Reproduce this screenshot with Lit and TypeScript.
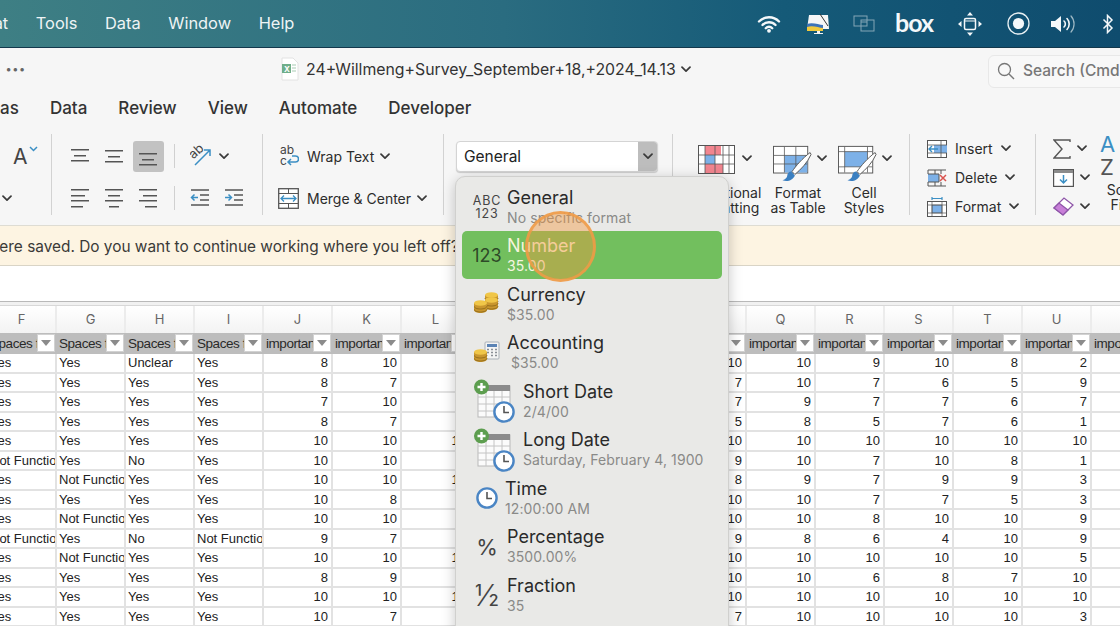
import { LitElement, html, css, svg } from "lit";
import { customElement } from "lit/decorators.js";

const chev = (cls = "") => html`<svg class="chev ${cls}" width="10" height="7" viewBox="0 0 10 7"><path d="M1 1.2 5 5.2 9 1.2" fill="none" stroke="#3a3a3a" stroke-width="1.7" stroke-linecap="round" stroke-linejoin="round"/></svg>`;

const lines = (rows: [number, number, number][]) => html`<svg width="22" height="24" viewBox="0 0 22 24">${rows.map(([y, a, b]) => svg`<rect x="${a}" y="${y}" width="${b - a}" height="1.5" fill="#555"/>`)}</svg>`;

const coin = (x: number, y: number) => svg`<g><path d="M${x} ${y}v7c0 1.9 3 3 6.5 3s6.5-1.1 6.5-3v-7z" fill="#c9962e"/><path d="M${x} ${y + 3}c0 1.9 3 3 6.5 3s6.5-1.1 6.5-3M${x} ${y + 6}c0 1.9 3 3 6.5 3s6.5-1.1 6.5-3" fill="none" stroke="#8a6618" stroke-width=".8"/><ellipse cx="${x + 6.5}" cy="${y}" rx="6.5" ry="2.8" fill="#f0c648"/></g>`;

const calendar = html`<svg width="44" height="44" viewBox="0 0 44 44">
  <rect x="4" y="7" width="32" height="31" fill="#fbfbfb" stroke="#b9b9b9"/>
  <rect x="8" y="6" width="28" height="6" fill="#8b8b8b"/>
  <path d="M4 18h32M4 25h32M4 32h32M12 12v26M20 12v26M28 12v26" stroke="#c4c4c4" fill="none"/>
  <circle cx="7.500" cy="8" r="7.500" fill="#5d9e4f"/>
  <path d="M7.500 4v8M3.500 8h8" stroke="#fff" stroke-width="2.4"/>
  <circle cx="30" cy="33" r="9.600" fill="#fff" stroke="#4a85c4" stroke-width="2.4"/>
  <path d="M30 27v6.500h5" fill="none" stroke="#555" stroke-width="1.600"/>
</svg>`;

const ICONS: Record<string, unknown> = {
  abc: html`<span class="abc"><b>ABC</b><b>123</b></span>`,
  num: html`<span class="num">123</span>`,
  coins: html`<svg width="26" height="24" viewBox="0 0 26 24">${coin(11, 3)}${coin(11, 8)}${coin(0, 11)}</svg>`,
  acct: html`<svg width="26" height="24" viewBox="0 0 26 24"><rect x="11" y="1" width="14" height="17" rx="1" fill="#f4f4f4" stroke="#a9b0b8"/><rect x="13" y="3" width="10" height="3" fill="#5b83b5"/><path d="M13 8.500h2M17 8.500h2M21 8.500h2M13 11.500h2M17 11.500h2M21 11.500h2M17 14.500h2M21 14.500h2" stroke="#8a8f96" stroke-width="1.400"/>${coin(0, 11)}</svg>`,
  clock: html`<svg width="24" height="24" viewBox="0 0 24 24"><circle cx="12" cy="12" r="9.600" fill="#fff" stroke="#4a85c4" stroke-width="2.400"/><path d="M12 6v6.500h5" fill="none" stroke="#555" stroke-width="1.600"/></svg>`,
  pct: html`<span class="pct">%</span>`,
  frac: html`<span class="frac">½</span>`,
};

const MENU = [
  { i: "abc", t: "General", s: "No specific format", c: "" },
  { i: "num", t: "Number", s: "35.00", c: "on" },
  { i: "coins", t: "Currency", s: "$35.00", c: "" },
  { i: "acct", t: "Accounting", s: "$35.00", c: "acct" },
  { i: "cal", t: "Short Date", s: "2/4/00", c: "date" },
  { i: "cal", t: "Long Date", s: "Saturday, February 4, 1900", c: "date" },
  { i: "clock", t: "Time", s: "12:00:00 AM", c: "time" },
  { i: "pct", t: "Percentage", s: "3500.00%", c: "" },
  { i: "frac", t: "Fraction", s: "35", c: "" },
];

const Y = "Yes", NF = "Not Functional", NO = "No", UN = "Unclear";
const ROWS: (string | number)[][] = [
  [Y, Y, UN, Y, 8, 10, 7, 8, 9, 9, 10, 10, 9, 10, 8, 2, ""],
  [Y, Y, Y, Y, 8, 7, 7, 8, 8, 8, 7, 10, 7, 6, 5, 9, ""],
  [Y, Y, Y, Y, 7, 10, 7, 7, 9, 8, 7, 9, 7, 7, 6, 7, ""],
  [Y, Y, Y, Y, 8, 7, 6, 7, 7, 7, 5, 8, 5, 7, 6, 1, ""],
  [Y, Y, Y, Y, 10, 10, 10, 10, 10, 10, 10, 10, 10, 10, 10, 10, ""],
  [NF, Y, NO, Y, 10, 10, 9, 9, 9, 9, 9, 10, 7, 10, 8, 1, ""],
  [Y, NF, Y, Y, 10, 10, 10, 8, 8, 8, 8, 9, 7, 9, 9, 3, ""],
  [Y, Y, Y, Y, 10, 8, 9, 9, 10, 10, 10, 10, 7, 7, 5, 3, ""],
  [Y, NF, Y, Y, 10, 10, 9, 10, 10, 10, 10, 10, 8, 10, 10, 9, ""],
  [NF, Y, NO, NF, 9, 7, 8, 8, 8, 8, 9, 8, 6, 4, 10, 9, ""],
  [Y, NF, Y, Y, 10, 10, 10, 10, 10, 10, 10, 10, 10, 10, 10, 5, ""],
  [Y, Y, Y, Y, 8, 9, 8, 10, 10, 10, 10, 10, 6, 8, 7, 10, ""],
  [Y, Y, Y, Y, 10, 10, 10, 10, 10, 10, 10, 10, 10, 10, 10, 10, ""],
  [Y, Y, Y, Y, 10, 7, 9, 7, 7, 7, 7, 10, 10, 10, 10, 3, ""],
];
const LETTERS = "FGHIJKLMNOPQRSTUV".split("");
const HEADS = LETTERS.map((_, i) => (i < 4 ? "Spaces for" : "importance"));

@customElement("app-root")
export class AppRoot extends LitElement {
  static styles = css`
    :host { display: block; width: 1120px; height: 626px; overflow: hidden; position: relative; background: #fff; font-family: Inter, "Liberation Sans", sans-serif; color: #2a2a2a; }
    svg { display: block; flex: none; }

    .menubar { height: 47px; border-bottom: 1px solid #13384c; background: linear-gradient(90deg, #3e7f84 0%, #2a6c80 45%, #155a78 70%, #0f4c6e 100%); display: flex; align-items: center; color: #eef4f5; font-size: 16.4px; position: relative; }
    .mitems { display: flex; gap: 27.6px; margin-left: -46px; padding-bottom: 2px; }
    .status { position: absolute; inset: 0 0 0 auto; width: 375px; display: grid; grid-template-columns: 48px 50px 42px 58px 54px 42px 48px 42px; align-items: center; justify-items: center; }
    .boxlogo { font-family: Lato, Inter, sans-serif; font-weight: 700; font-size: 25px; letter-spacing: -1px; color: #f4f8fa; line-height: 1; padding-bottom: 3px; }

    .titlebar { height: 40px; background: #f6f6f6; display: flex; align-items: center; position: relative; padding-top: 2px; box-sizing: border-box; }
    .dots { margin-left: 6px; letter-spacing: 1.5px; color: #666; font-size: 11px; font-weight: 700; width: 275px; line-height: 1; }
    .doc { margin-right: 7px; }
    .ftitle { font-size: 15.83px; color: #333; white-space: nowrap; }
    .titlebar .chev { margin-left: 5px; }
    .search { position: absolute; left: 988px; top: 7px; width: 160px; height: 33px; box-sizing: border-box; border: 1px solid #e8e8e8; border-radius: 6px; background: #f8f8f8; display: flex; align-items: center; gap: 8px; padding: 0 0 2px 8px; font-size: 15.5px; font-weight: 500; color: #777; white-space: nowrap; }

    .tabs { height: 37px; background: #f6f6f6; display: flex; align-items: center; gap: 31px; font-size: 17px; font-weight: 500; color: #333; padding-top: 3px; box-sizing: border-box; }
    .tabs .cut { margin-left: -56px; }

    .ribbon { height: 100px; background: #f6f6f6; border-bottom: 1px solid #dedcd3; display: flex; font-size: 14px; color: #2c2c2c; white-space: nowrap; }
    .grp { flex: none; position: relative; box-sizing: border-box; }
    .grp + .grp::before { content: ""; position: absolute; left: 0; top: 9px; height: 81px; width: 1px; background: #d2d2d2; }
    .g0 { width: 51px; display: grid; grid-template-rows: 42px 42px; padding-top: 10px; }
    .afont { font-size: 21px; margin-left: 13px; display: flex; align-self: center; color: #444; }
    .afont svg { margin: 2px 0 0 1px; }
    .g0 .chev { margin: 0 0 0 2px; align-self: center; }
    .g1 { width: 211px; padding: 10px 0 0 12px; display: grid; grid-template-columns: 34px 34px 34px 18px 34px 34px; grid-template-rows: 42px 42px; justify-items: center; align-items: center; }
    .sel { width: 31px; height: 31px; border-radius: 3px; background: #c2c2c2; display: flex; align-items: center; justify-content: center; }
    .vsep { width: 1px; height: 24px; background: #d0d0d0; }
    .orient { grid-column: 5 / 7; justify-self: start; margin-left: 7px; display: flex; align-items: center; gap: 7px; }
    .g2 { width: 181px; padding: 10px 0 0 16px; display: grid; grid-template-rows: 42px 42px; }
    .iconrow { display: flex; align-items: center; gap: 8px; }
    .iconrow .chev { margin-left: 0; }
    .g2 .iconrow .chev { margin-left: -2px; }
    .wrapic { width: 21px; display: flex; justify-content: flex-end; }
    .g3 { width: 229px; padding: 16px 0 0 13px; }
    .combo { width: 202px; height: 31px; box-sizing: border-box; border: 1px solid #d4d4d4; border-radius: 4px; background: #fff; display: flex; align-items: stretch; box-shadow: 0 1px 1px #ccc; font-size: 15.5px; color: #222; }
    .combo span { flex: 1; padding-left: 7px; line-height: 29px; }
    .combo i { width: 19px; background: #bdbdbd; border-radius: 0 3px 3px 0; display: flex; align-items: center; justify-content: center; }
    .g4 { width: 237px; display: grid; grid-template-columns: 79px 66px 66px; padding-left: 14px; }
    .gal { display: flex; flex-direction: column; }
    .gal:first-child .glabel { width: 76px; }
    .gal:first-child .gtop { padding-left: 12px; gap: 7px; }
    .gtop { height: 60px; box-sizing: border-box; padding: 20px 0 0 8px; display: flex; gap: 5px; align-items: flex-start; }
    .gtop .chev { margin-top: 10px; }
    .gal:last-child .gtop { padding-left: 7px; }
    .glabel { text-align: center; line-height: 15px; }
    .g5 { width: 126px; padding: 9px 0 0 18px; display: grid; grid-template-rows: 29px 29px 29px; }
    .g6 { width: 90px; padding: 9px 0 0 18px; display: flex; }
    .stack { width: 47px; flex: none; display: grid; grid-template-rows: 29px 29px 29px; }
    .stack .iconrow { gap: 6px; }
    .sort { flex: none; width: 54px; }
    .sort .glabel { margin-top: 4px; }

    .banner { height: 39px; background: #fdf4e2; border-bottom: 1px solid #d9d4c6; font-size: 15.4px; line-height: 41px; white-space: nowrap; color: #3a3a38; overflow: hidden; }
    .banner span { margin-left: -13px; }
    .formula { height: 35px; background: #fff; border-bottom: 1px solid #b9b9b9; }
    .gap { height: 3px; background: #f1f1f1; border-bottom: 1px solid #d8d8d8; }

    .sheet { margin-left: -12px; display: grid; grid-template-columns: repeat(17, 69px); width: 1173px; font-family: "Liberation Sans", Arial, sans-serif; font-size: 13px; }
    .lt { height: 27px; background: linear-gradient(#fff, #f3f3f3); border-right: 2px solid #ececec; box-sizing: border-box; text-align: center; font-family: Inter, sans-serif; font-size: 13px; line-height: 26px; color: #666; }
    .hd { height: 21px; background: #bdbdbd; position: relative; overflow: hidden; padding: 2px 0 0 2px; box-sizing: border-box; line-height: 18px; color: #2a2a2a; white-space: nowrap; font-size: 13.5px; letter-spacing: -.45px; }
    .fb { position: absolute; right: 2px; top: 1px; width: 18px; height: 18px; background: #fff; box-sizing: border-box; border: 1px solid #d2d2d2; display: flex; align-items: center; justify-content: center; }
    .fb::after { content: ""; border: 5px solid transparent; border-top: 6px solid #8b8b8b; border-bottom: 0; }
    .cell { height: 19.5px; box-sizing: border-box; border-right: 2px solid #e2e2e2; border-bottom: 2px solid #e2e2e2; overflow: hidden; white-space: nowrap; padding: 0 3px 0 2px; line-height: 18px; color: #222; }
    .cell.n { text-align: right; }

    .menu { position: absolute; left: 455px; top: 176px; width: 274px; height: 470px; box-sizing: border-box; background: #e9e9e7; border: 1px solid #d0d0ce; border-radius: 10px; box-shadow: 0 3px 14px rgba(0,0,0,.22); padding: 5px 6px 6px; }
    .mi { height: 48.5px; box-sizing: border-box; border-radius: 5px; display: flex; align-items: center; padding: 2px 0 0 12px; }
    .mi.on { background: #72bf5e; color: #f7f4dc; }
    .mi.on small { color: #f6f6e2; }
    .mic { width: 26px; flex: none; display: flex; justify-content: center; align-items: center; margin-right: 7px; }
    .mt { display: flex; flex-direction: column; font-size: 18px; line-height: 20px; }
    .mi small { font-size: 14px; color: #8a8a88; line-height: 19px; letter-spacing: .1px; }
    .date .mic { width: 44px; margin: 0 5px 0 0; }
    .time .mic { margin-right: 5px; }
    .acct small { padding-left: 4px; }
    .abc { display: flex; flex-direction: column; align-items: center; font-size: 12.5px; line-height: 13px; letter-spacing: .8px; color: #444; }
    .abc b { font-weight: 400; }
    .num { font-size: 18px; color: #2e4a28; }
    .pct { font-size: 22px; color: #444; }
    .frac { font-size: 30px; line-height: 1; color: #444; font-weight: 300; }
    .touch { position: absolute; left: 525px; top: 211px; width: 71px; height: 71px; box-sizing: border-box; border-radius: 50%; background: rgba(242, 150, 60, .42); border: 3px solid rgba(240, 155, 70, .85); }
  `;

  private statusIcons() {
    return html`
      <svg width="24" height="18" viewBox="0 0 24 18"><path d="M2 6.500a14 14 0 0 1 20 0M5.500 10a9 9 0 0 1 13 0M8.800 13.200a4.400 4.400 0 0 1 6.400 0" fill="none" stroke="#f4f8fa" stroke-width="2.400" stroke-linecap="round"/><circle cx="12" cy="15.800" r="1.900" fill="#f4f8fa"/></svg>
      <svg width="25" height="23" viewBox="0 0 25 23"><path d="M3 3h19l1 14H1z" fill="#f6f6f6"/><path d="M1 12c6-2 12 1 16 1v4H1z" fill="#3d73b8"/><path d="M1 15c6-2 12 1 16 1v3H1z" fill="#f1c93c"/><path d="M14 2l8 12" stroke="#333" stroke-width="1"/><path d="M11 19h3v2h3v1H8v-1h3z" fill="#f4f4f4"/></svg>
      <svg width="22" height="17" viewBox="0 0 22 17" opacity=".55"><rect x="1" y="1" width="13" height="10" fill="none" stroke="#dfe8ec"/><rect x="8" y="5" width="13" height="11" fill="none" stroke="#dfe8ec"/><path d="M8 7h6" stroke="#dfe8ec"/></svg>
      <span class="boxlogo">box</span>
      <svg width="24" height="24" viewBox="0 0 24 24"><rect x="6.500" y="6.500" width="11" height="11" rx="1.500" fill="none" stroke="#f4f8fa" stroke-width="1.500"/><path d="M6.500 9h11" stroke="#f4f8fa"/><path d="M12 0l3 3.500H9zM12 24l-3-3.500h6zM0 12l3.500-3v6zM24 12l-3.500 3V9z" fill="#f4f8fa"/></svg>
      <svg width="23" height="23" viewBox="0 0 23 23"><circle cx="11.500" cy="11.500" r="10.500" fill="none" stroke="#e8f0f3" stroke-width="1.300"/><circle cx="11.500" cy="11.500" r="5.600" fill="#f4f8fa"/></svg>
      <svg width="26" height="20" viewBox="0 0 26 20"><path d="M1 7h4l6-5v16l-6-5H1z" fill="#f4f8fa"/><path d="M14 7a4 4 0 0 1 0 6M17 4.500a8 8 0 0 1 0 11" fill="none" stroke="#f4f8fa" stroke-width="1.600" stroke-linecap="round"/><path d="M21 2a12 12 0 0 1 0 16" fill="none" stroke="#9db8c4" stroke-width="1.200" stroke-linecap="round"/></svg>
      <svg width="12" height="20" viewBox="0 0 12 20"><path d="M1.500 5.500 10 14l-4.500 4.500v-17L10 6l-8.500 8.500" fill="none" stroke="#f4f8fa" stroke-width="1.500"/></svg>`;
  }

  private g1() {
    const top = lines([[5, 2, 20], [11, 5, 17], [16, 2, 20]]);
    const mid = lines([[6, 2, 20], [12, 5, 17], [17, 2, 20]]);
    const bot = lines([[9, 2, 20], [15, 5, 17], [20, 2, 20]]);
    const al = lines([[3, 2, 20], [9, 2, 16], [14, 2, 20], [20, 2, 14]]);
    const ac = lines([[3, 2, 20], [9, 5, 17], [14, 2, 20], [20, 6, 16]]);
    const ar = lines([[3, 2, 20], [9, 6, 20], [14, 2, 20], [20, 8, 20]]);
    const indent = (d: string) => html`<svg width="20" height="20" viewBox="0 0 20 20"><path d="M1 2h18M10 7h9M10 12h9M1 17h18" stroke="#555" stroke-width="1.500"/><path d="${d}" fill="none" stroke="#3b8fc4" stroke-width="1.500"/></svg>`;
    return html`<div class="grp g1">
      <div>${top}</div><div>${mid}</div><div class="sel">${bot}</div><div class="vsep"></div>
      <div class="orient"><svg width="22" height="24" viewBox="0 0 22 24"><path d="M5 21 20 6M14 6h6v6" fill="none" stroke="#3b8fc4" stroke-width="1.500"/><text x="0" y="13" transform="rotate(-42 5 10)" font-size="13" font-family="Inter" fill="#444">ab</text></svg>${chev()}</div>
      <div>${al}</div><div>${ac}</div><div>${ar}</div><div class="vsep"></div>
      ${indent("M8 9.500H1.500M4.500 6.500l-3 3 3 3")}${indent("M1 9.500h6.500M4.500 6.500l3 3-3 3")}
    </div>`;
  }

  private ribbon() {
    const pen = svg`<path d="M39 7C31 13 24 21 20 27l3 3c6-5 13-12 17-21z" fill="#fff" stroke="#555"/><path d="M19 27c-2 0-4 2-4 4s-2 4-5 5c5 2 11 0 13-5z" fill="#3a7fc1"/>`;
    return html`<div class="ribbon">
      <div class="grp g0"><div class="afont">A<svg width="9" height="6" viewBox="0 0 9 6"><path d="M1 1l3.500 3.500L8 1" fill="none" stroke="#3b8fc4" stroke-width="1.500"/></svg></div>${chev()}</div>
      ${this.g1()}
      <div class="grp g2">
        <div class="iconrow"><span class="wrapic"><svg width="19" height="22" viewBox="0 0 19 22"><text x="0" y="9" font-size="12" font-family="Inter" fill="#444">ab</text><text x="0" y="20" font-size="12" font-family="Inter" fill="#444">c</text><path d="M12 11h3.500a2.600 2.600 0 0 1 0 6H8M11 14l-3 3 3 3" fill="none" stroke="#3b8fc4" stroke-width="1.500"/></svg></span><span>Wrap Text</span>${chev()}</div>
        <div class="iconrow"><svg width="21" height="21" viewBox="0 0 21 21"><rect x=".7" y=".7" width="19.600" height="19.600" fill="#fff" stroke="#555" stroke-width="1.300"/><path d="M1 5.500h19M1 15.500h19M10.500 1v4M10.500 16v4" stroke="#555"/><path d="M3 10.500h15M6 7.500l-3 3 3 3M15 7.500l3 3-3 3" fill="none" stroke="#3b8fc4" stroke-width="1.300"/></svg><span>Merge &amp; Center</span>${chev()}</div>
      </div>
      <div class="grp g3"><div class="combo"><span>General</span><i>${chev()}</i></div></div>
      <div class="grp g4">
        <div class="gal"><div class="gtop"><svg width="37" height="29" viewBox="0 0 37 29"><rect x=".5" y=".5" width="36" height="28" fill="#fff" stroke="#555"/><path d="M7 1h16v9H7zM17 19h8v9H7v-9z" fill="#f2858f"/><rect x="7" y="10" width="10" height="9" fill="#7db1e8"/><path d="M7 1v27M17 1v27M25 1v27M31 1v27M1 10h35M1 19h35" stroke="#555" stroke-width=".8" fill="none"/></svg>${chev()}</div><div class="glabel">Conditional<br/>Formatting</div></div>
        <div class="gal"><div class="gtop"><svg width="39" height="37" viewBox="0 0 41 37"><rect x=".5" y=".5" width="36" height="28" fill="#fff" stroke="#555"/><rect x="12" y="10" width="24" height="18" fill="#7db1e8"/><path d="M12 1v27M24 1v27M1 10h35M1 19h35" stroke="#555" stroke-width=".8"/>${pen}</svg>${chev()}</div><div class="glabel">Format<br/>as Table</div></div>
        <div class="gal"><div class="gtop"><svg width="39" height="37" viewBox="0 0 41 37"><rect x=".5" y=".5" width="36" height="28" fill="#fff" stroke="#555"/><rect x="7" y="6" width="24" height="16" fill="#7db1e8"/><path d="M7 1v27M31 1v27M1 6h35M1 22h35" stroke="#555" stroke-width=".8"/>${pen}</svg>${chev()}</div><div class="glabel">Cell<br/>Styles</div></div>
      </div>
      <div class="grp g5">
        <div class="iconrow"><svg width="20" height="18" viewBox="0 0 20 18"><rect x=".5" y=".5" width="19" height="17" fill="#fff" stroke="#555"/><rect x="7" y="5" width="13" height="8" fill="#7db1e8"/><path d="M1 5h19M1 13h19M14 1v16" stroke="#555" stroke-width=".8"/><path d="M11 9H2M5 6 2 9l3 3" fill="none" stroke="#3b8fc4" stroke-width="1.400"/></svg><span>Insert</span>${chev()}</div>
        <div class="iconrow"><svg width="20" height="18" viewBox="0 0 20 18"><path d="M1 1h18M1 17h18M1 1v4M1 13v4M8 1v4M8 13v4M14 1v4M14 13v4" stroke="#555" fill="none"/><path d="M1 5h11v8H1" fill="#7db1e8" stroke="#555"/><path d="M13 6l6 6M19 6l-6 6" stroke="#d9534f" stroke-width="1.500"/></svg><span>Delete</span>${chev()}</div>
        <div class="iconrow"><svg width="20" height="20" viewBox="0 0 20 20"><rect x=".5" y="4.500" width="19" height="15" fill="#fff" stroke="#555"/><rect x="5" y="8" width="10" height="8" fill="#7db1e8" stroke="#555" stroke-width=".6"/><path d="M5 4v16M15 4v16M1 8h18M1 16h18" stroke="#555" stroke-width=".7"/><path d="M5 1.500h10M5 0v3M15 0v3" stroke="#3b8fc4" stroke-width="1.200"/></svg><span>Format</span>${chev()}</div>
      </div>
      <div class="grp g6">
        <div class="stack">
          <div class="iconrow"><svg width="18" height="20" viewBox="0 0 18 20"><path d="M17 3V1H1l8 9-8 9h16v-2" fill="none" stroke="#555" stroke-width="1.400"/></svg>${chev()}</div>
          <div class="iconrow"><svg width="21" height="18" viewBox="0 0 21 18"><rect x=".6" y=".6" width="19.800" height="16.800" fill="#fff" stroke="#555" stroke-width="1.200"/><rect x="1" y="1" width="19" height="3" fill="#8b8b8b"/><path d="M10.500 6v8M7 10.500l3.500 3.500 3.500-3.500" fill="none" stroke="#3b8fc4" stroke-width="1.500"/></svg>${chev()}</div>
          <div class="iconrow"><svg width="21" height="19" viewBox="0 0 21 19"><path d="M1 11 11 1l9 7-10 10z" fill="#fff" stroke="#8e55a8" stroke-width="1.300"/><path d="M1 11l5-5 9 7-5 5z" fill="#c87fd8" stroke="#8e55a8" stroke-width="1.300"/></svg>${chev()}</div>
        </div>
        <div class="sort"><svg width="24" height="44" viewBox="0 0 24 44"><text x="0" y="18" font-size="22" font-family="Inter" fill="#3b8fc4">A</text><text x="0" y="41" font-size="22" font-family="Inter" fill="#555">Z</text></svg><div class="glabel">Sort &amp;<br/>Filter</div></div>
      </div>
    </div>`;
  }

  private sheet() {
    return html`<div class="sheet">
      ${LETTERS.map((l) => html`<div class="lt">${l}</div>`)}
      ${HEADS.map((h, i) => html`<div class="hd">${h}${i < 16 ? html`<span class="fb"></span>` : ""}</div>`)}
      ${ROWS.map((r) => r.map((v) => html`<div class="cell ${typeof v === "number" ? "n" : ""}">${v}</div>`))}
    </div>`;
  }

  render() {
    return html`
      <div class="menubar">
        <div class="mitems"><span>Format</span><span>Tools</span><span>Data</span><span>Window</span><span>Help</span></div>
        <div class="status">${this.statusIcons()}</div>
      </div>
      <div class="titlebar">
        <div class="dots">•••</div>
        <svg class="doc" width="18" height="24" viewBox="0 0 18 24"><path d="M1 1h11l5 5v17H1z" fill="#fff" stroke="#e2e2e2"/><rect x="1" y="7" width="9" height="9" fill="#6fae8a"/><text x="3" y="14.500" font-size="8" font-family="Inter" font-weight="700" fill="#fff">X</text><path d="M11 8h4M11 11h4M11 14h4" stroke="#a7cbb3"/></svg>
        <span class="ftitle">24+Willmeng+Survey_September+18,+2024_14.13</span>${chev()}
        <div class="search"><svg width="18" height="18" viewBox="0 0 18 18"><circle cx="7.500" cy="7.500" r="6" fill="none" stroke="#777" stroke-width="1.300"/><path d="M12 12l5 5" stroke="#777" stroke-width="1.400"/></svg><span>Search (Cmd + Ctrl + U)</span></div>
      </div>
      <div class="tabs"><span class="cut">Formulas</span><span>Data</span><span>Review</span><span>View</span><span>Automate</span><span>Developer</span></div>
      ${this.ribbon()}
      <div class="banner"><span>were saved. Do you want to continue working where you left off?</span></div>
      <div class="formula"></div>
      <div class="gap"></div>
      ${this.sheet()}
      <div class="menu">
        ${MENU.map((m) => html`<div class="mi ${m.c}"><span class="mic">${m.i === "cal" ? calendar : ICONS[m.i]}</span><span class="mt">${m.t}<small>${m.s}</small></span></div>`)}
      </div>
      <div class="touch"></div>
    `;
  }
}
